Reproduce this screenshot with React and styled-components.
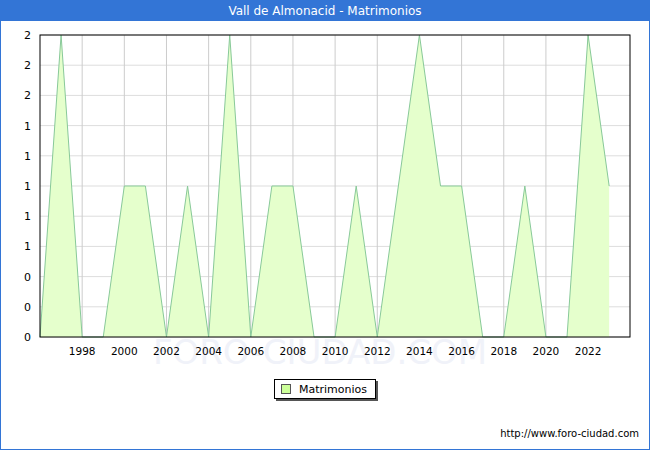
import React from "react";
import styled, { createGlobalStyle } from "styled-components";

const Global = createGlobalStyle`
  body { margin: 0; font-family: "DejaVu Sans", sans-serif; background: #fff; }
`;
const Frame = styled.div`
  width: 650px; height: 450px; box-sizing: border-box;
  border: 1px solid #3375d6; border-top: none;
  display: flex; flex-direction: column; background: #fff;
`;
const Header = styled.div`
  height: 21px; background: #3375d6; color: #fff; font-size: 12px;
  display: flex; align-items: center; justify-content: center; margin: 0 -1px;
`;
const LegendRow = styled.div`
  display: flex; justify-content: center; margin-top: 14px;
`;
const Legend = styled.div`
  display: flex; align-items: center; gap: 8px; font-size: 11px; color: #000;
  border: 1px solid #000; box-shadow: 2px 2px 0 #555; padding: 2px 8px 2px 6px;
  height: 14px;
`;
const Swatch = styled.span`
  width: 8px; height: 8px; background: #ccff99; border: 1px solid #555;
`;
const Footer = styled.div`
  margin-top: auto; padding: 0 10px 10px 0; text-align: right; font-size: 10px; color: #000;
`;

const data = [0,2,0,0,1,1,0,1,0,2,0,1,1,0,0,1,0,1,2,1,1,0,0,1,0,0,2,1];
const X = (i) => 40 + i * 21.08;
const Y = (v) => 337 - v * 151;

function Chart() {
  const yLines = Array.from({ length: 11 }, (_, i) => 337 - i * 30.2);
  const yLabels = ["0","0","0","1","1","1","1","1","2","2","2"];
  const pts = data.map((v, i) => `${X(i)},${Y(v)}`).join(" ");
  const area = `${X(0)},337 ${pts} ${X(data.length - 1)},337`;
  const years = [];
  for (let y = 1998; y <= 2022; y += 2) years.push(y);
  return (
    <svg width="648" height="344" viewBox="1 21 648 344" style={{ display: "block" }}>
      <text x="320" y="364" fontSize="34" fill="#f0f2f9" textAnchor="middle" fontFamily="DejaVu Sans">FORO-CIUDAD.COM</text>
      {yLines.map((y, i) => <line key={i} x1="40" x2="630" y1={y} y2={y} stroke="#ddd" />)}
      {years.map((yr) => <line key={yr} x1={X(yr - 1996)} x2={X(yr - 1996)} y1="35" y2="337" stroke="#ccc" />)}
      <polygon points={area} fill="#e5ffcc" />
      <polyline points={pts} fill="none" stroke="#88c999" strokeWidth="1" />
      <rect x="40" y="35" width="590" height="302" fill="none" stroke="#000" />
      {yLines.map((y, i) => (
        <text key={i} x="31" y={y + 4} fontSize="11" textAnchor="end" fill="#000" fontFamily="DejaVu Sans">{yLabels[i]}</text>
      ))}
      {years.map((yr) => (
        <text key={yr} x={X(yr - 1996)} y="355" fontSize="10.5" textAnchor="middle" fill="#000" fontFamily="DejaVu Sans">{yr}</text>
      ))}
    </svg>
  );
}

export default function App() {
  return (
    <>
      <Global />
      <Frame>
        <Header>Vall de Almonacid - Matrimonios</Header>
        <Chart />
        <LegendRow>
          <Legend><Swatch />Matrimonios</Legend>
        </LegendRow>
        <Footer>http://www.foro-ciudad.com</Footer>
      </Frame>
    </>
  );
}
